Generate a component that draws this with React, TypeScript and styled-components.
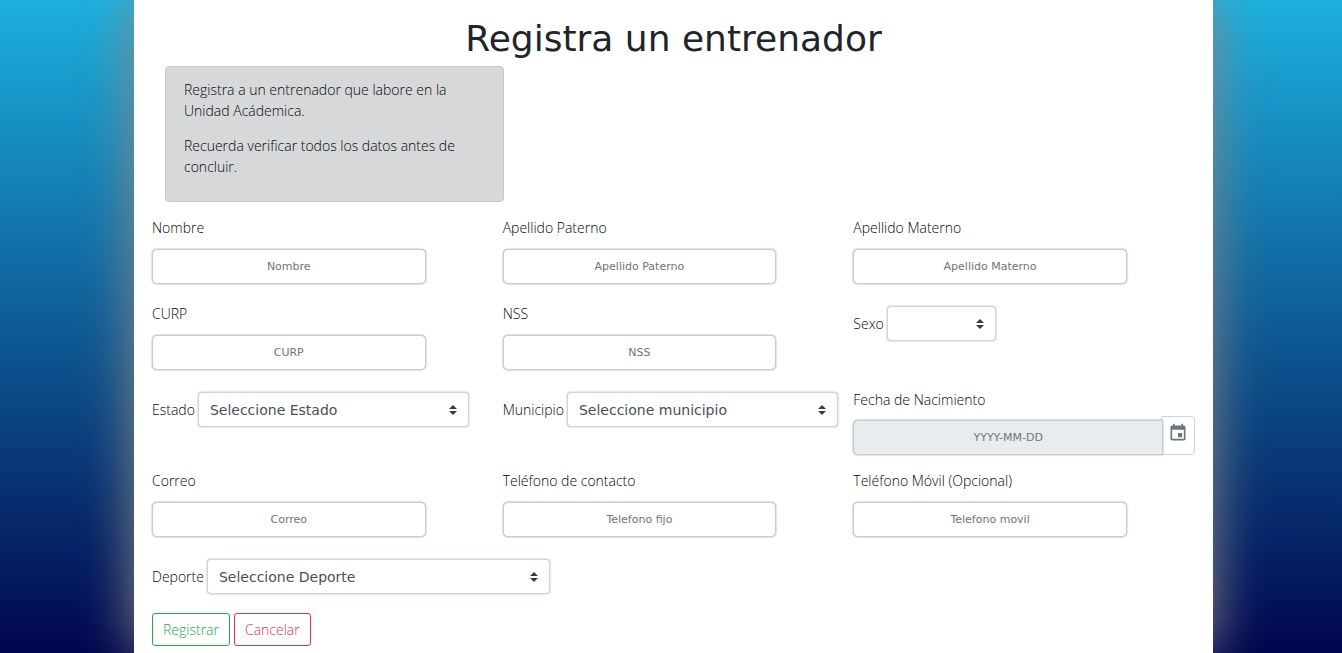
import React from "react";
import styled, { createGlobalStyle } from "styled-components";
import { MdEvent } from "react-icons/md";

const uiFont = `"Open Sans", "Noto Sans", sans-serif`;
const wideFont = `"DejaVu Sans", Verdana, sans-serif`;

const GlobalStyle = createGlobalStyle`
  *, *::before, *::after { box-sizing: border-box; }
  body {
    margin: 0;
    min-height: 100vh;
    background: linear-gradient(to bottom, #1cb0de, #00064e) no-repeat;
    color: #05080b;
    font-family: ${uiFont};
    font-size: 14px;
    font-weight: 340;
    line-height: 21px;
  }
`;

const Page = styled.div`
  display: flex;
  min-height: 100vh;
  padding: 0 129px 0 134px;
  overflow: hidden;
`;

const Panel = styled.main`
  flex: 1;
  min-width: 0;
  padding: 18px 0 7px;
  background: #fff;
  box-shadow: 0 0 50px #888;
`;

const Title = styled.h1`
  margin: 0 0 6px;
  color: #212529;
  font-family: ${wideFont};
  font-size: 36px;
  font-weight: 400;
  line-height: 42px;
  text-align: center;
`;

const Notice = styled.div`
  max-width: 339px;
  margin: 0 0 15px 31px;
  padding: 12px 18px 10px;
  border: 1px solid #c6c8ca;
  border-radius: 4px;
  background: #d6d8d9;

  p { margin: 0 0 14px; }
`;

const Form = styled.form`
  padding: 0 9px 0 18px;
`;

const Row = styled.div<{ $gap?: number }>`
  display: grid;
  grid-template-columns: repeat(3, minmax(0, 1fr));
  margin-bottom: ${(p) => p.$gap ?? 19}px;
`;

const Field = styled.div`
  display: flex;
  flex-direction: column;
  align-items: flex-start;
  gap: 11px;
`;

const DateField = styled(Field)`
  gap: 6px;
`;

const InlineField = styled.div`
  display: flex;
  align-items: center;
  align-self: start;
  gap: 3px;
  padding-top: 3px;
  white-space: nowrap;
`;

const Label = styled.label``;

const TextInput = styled.input`
  width: 78%;
  height: 35px;
  padding: 6px 12px;
  border: 1px solid #ccc;
  border-radius: 5px;
  background: #fff;
  box-shadow: 0 0 2px #999;
  color: #495057;
  font-family: ${wideFont};
  font-size: 11px;
  text-align: center;

  &::placeholder { color: #6c757d; opacity: 1; }
`;

const DateInput = styled(TextInput)`
  flex: 1;
  width: auto;
  min-width: 0;
  border-radius: 5px 0 0 5px;
  background: #e9ecef;
  z-index: 1;
`;

const DateGroup = styled.div`
  display: flex;
  align-items: flex-end;
  width: calc(100% - 9px);
`;

const CalendarButton = styled.button`
  display: flex;
  justify-content: center;
  width: 34px;
  height: 39px;
  margin-left: -2px;
  padding: 6px 0 0;
  border: 1px solid #ced4da;
  border-radius: 0 4px 4px 0;
  background: #fff;
  color: #6c757d;
`;

const Select = styled.select<{ $width: number }>`
  flex: none;
  width: ${(p) => p.$width}px;
  height: 35px;
  padding: 0 24px 0 11px;
  appearance: none;
  border: 1px solid #ced4da;
  border-radius: 4px;
  background: #fff
    url("data:image/svg+xml,%3csvg xmlns='http://www.w3.org/2000/svg' viewBox='0 0 4 5'%3e%3cpath fill='%23343a40' d='M2 0L0 2h4zm0 5L0 3h4z'/%3e%3c/svg%3e")
    no-repeat right 11px center / 8px 10px;
  box-shadow: 0 0 2px #aaa;
  color: #495057;
  font-family: ${wideFont};
  font-size: 14px;
`;

const Actions = styled.div`
  display: flex;
  gap: 4px;
`;

const ActionButton = styled.button<{ $tone: string }>`
  height: 33px;
  padding: 0 10px;
  border: 1px solid ${(p) => p.$tone};
  border-radius: 3px;
  background: transparent;
  color: ${(p) => p.$tone};
  font-family: inherit;
  font-size: 14px;
  font-weight: inherit;
`;

function TextField({ id, label, hint }: { id: string; label: string; hint: string }) {
  return (
    <Field>
      <Label htmlFor={id}>{label}</Label>
      <TextInput id={id} type="text" placeholder={hint} />
    </Field>
  );
}

function SelectField({ id, label, option, width }: { id: string; label: string; option: string; width: number }) {
  return (
    <InlineField>
      <Label htmlFor={id}>{label}</Label>
      <Select id={id} $width={width}>
        <option>{option}</option>
      </Select>
    </InlineField>
  );
}

export default function App() {
  return (
    <>
      <GlobalStyle />
      <Page>
        <Panel>
          <Title>Registra un entrenador</Title>
          <Notice>
            <p>Registra a un entrenador que labore en la Unidad Acádemica.</p>
            <p>Recuerda verificar todos los datos antes de concluir.</p>
          </Notice>
          <Form onSubmit={(e) => e.preventDefault()}>
            <Row>
              <TextField id="nombre" label="Nombre" hint="Nombre" />
              <TextField id="paterno" label="Apellido Paterno" hint="Apellido Paterno" />
              <TextField id="materno" label="Apellido Materno" hint="Apellido Materno" />
            </Row>
            <Row>
              <TextField id="curp" label="CURP" hint="CURP" />
              <TextField id="nss" label="NSS" hint="NSS" />
              <SelectField id="sexo" label="Sexo" option="" width={109} />
            </Row>
            <Row $gap={15}>
              <SelectField id="estado" label="Estado" option="Seleccione Estado" width={271} />
              <SelectField id="municipio" label="Municipio" option="Seleccione municipio" width={271} />
              <DateField>
                <Label htmlFor="fecha">Fecha de Nacimiento</Label>
                <DateGroup>
                  <DateInput id="fecha" type="text" placeholder="YYYY-MM-DD" readOnly />
                  <CalendarButton type="button" aria-label="Abrir calendario">
                    <MdEvent size={20} />
                  </CalendarButton>
                </DateGroup>
              </DateField>
            </Row>
            <Row>
              <TextField id="correo" label="Correo" hint="Correo" />
              <TextField id="telefono" label="Teléfono de contacto" hint="Telefono fijo" />
              <TextField id="movil" label="Teléfono Móvil (Opcional)" hint="Telefono movil" />
            </Row>
            <Row>
              <SelectField id="deporte" label="Deporte" option="Seleccione Deporte" width={343} />
            </Row>
            <Actions>
              <ActionButton type="submit" $tone="#28a745">Registrar</ActionButton>
              <ActionButton type="button" $tone="#dc3545">Cancelar</ActionButton>
            </Actions>
          </Form>
        </Panel>
      </Page>
    </>
  );
}
